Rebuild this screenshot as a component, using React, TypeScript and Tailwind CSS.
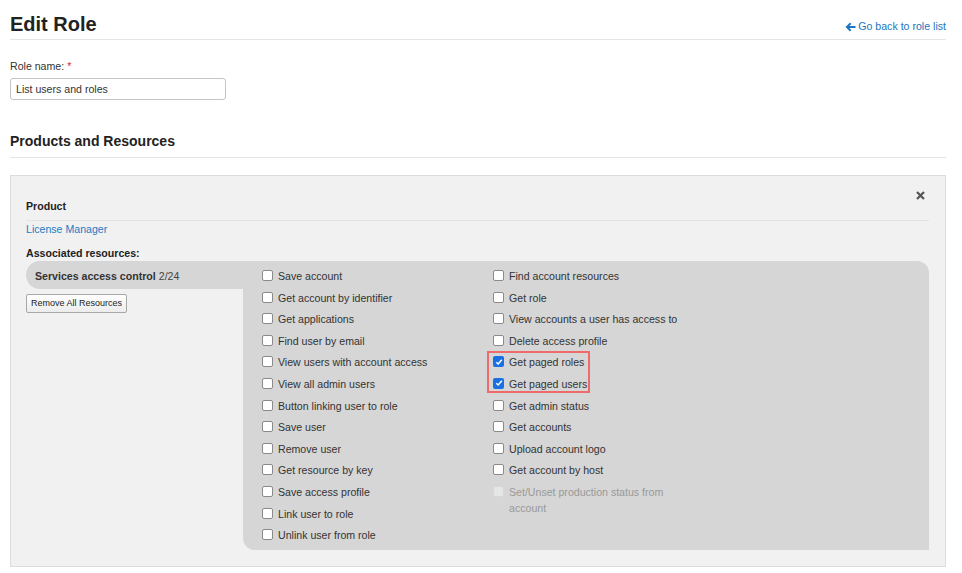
import React from 'react';

const colA = [
  'Save account',
  'Get account by identifier',
  'Get applications',
  'Find user by email',
  'View users with account access',
  'View all admin users',
  'Button linking user to role',
  'Save user',
  'Remove user',
  'Get resource by key',
  'Save access profile',
  'Link user to role',
  'Unlink user from role',
];

const colB = [
  { label: 'Find account resources' },
  { label: 'Get role' },
  { label: 'View accounts a user has access to' },
  { label: 'Delete access profile' },
  { label: 'Get paged roles', checked: true },
  { label: 'Get paged users', checked: true },
  { label: 'Get admin status' },
  { label: 'Get accounts' },
  { label: 'Upload account logo' },
  { label: 'Get account by host' },
  { label: 'Set/Unset production status from account', disabled: true },
];

function Box({ checked, disabled }: { checked?: boolean; disabled?: boolean }) {
  if (checked) {
    return (
      <span className="mt-[2px] flex h-[11px] w-[11px] shrink-0 items-center justify-center rounded-[2px] bg-[#1a6fe3]">
        <svg width="8" height="8" viewBox="0 0 8 8">
          <path d="M1.3 4.2 L3.2 6 L6.8 1.8" fill="none" stroke="white" strokeWidth="1.5" />
        </svg>
      </span>
    );
  }
  return (
    <span
      className={
        disabled
          ? 'mt-[2px] h-[11px] w-[11px] shrink-0 rounded-[2px] border border-[#d8d8d8] bg-[#e6e6e6]'
          : 'mt-[2px] h-[11px] w-[11px] shrink-0 rounded-[2px] border border-[#8a8a8a] bg-white'
      }
    />
  );
}

function Row({ label, checked, disabled }: { label: string; checked?: boolean; disabled?: boolean }) {
  return (
    <div className="flex gap-[5px] leading-[16px]">
      <Box checked={checked} disabled={disabled} />
      <span className={disabled ? 'text-[#999]' : 'text-[#333]'}>{label}</span>
    </div>
  );
}

export default function App() {
  return (
    <div
      className="min-h-[573px] w-[962px] bg-white px-[10px] pb-[6px] text-[10.6px] text-[#333]"
      style={{ fontFamily: '"Liberation Sans", Arial, sans-serif' }}
    >
      {/* header */}
      <div className="mr-[6px] flex items-center justify-between border-b border-[#e5e5e5] pt-[9px]">
        <h1 className="text-[20px] font-bold leading-[30px] text-[#222]">Edit Role</h1>
        <a className="flex items-center gap-[2px] pt-[6px] text-[10.6px] text-[#1b75bc]">
          <svg width="11" height="10" viewBox="0 0 11 10">
            <path d="M5 0.5 L0.5 5 L5 9.5 L6.4 8.1 L4.3 6 L10.5 6 L10.5 4 L4.3 4 L6.4 1.9 Z" fill="#1b75bc" />
          </svg>
          Go back to role list
        </a>
      </div>

      {/* role name */}
      <div className="mt-[18px] leading-[16px]">
        Role name: <span className="text-[#e02020]">*</span>
      </div>
      <input
        defaultValue="List users and roles"
        className="mt-[4px] h-[22px] w-[216px] rounded-[3px] border border-[#c4c4c4] px-[5px] text-[10.6px] text-[#333] outline-none"
      />

      {/* products */}
      <h2 className="mr-[6px] mt-[31px] border-b border-[#e5e5e5] pb-[6px] text-[14px] font-bold leading-[20px] text-[#222]">
        Products and Resources
      </h2>

      <div className="mr-[6px] mt-[17px] border border-[#dcdcdc] bg-[#f1f1f1] pb-[16px] pl-[15px] pr-[16px] pt-[22px]">
        <div className="relative border-b border-[#e3e3e3] pb-[6px] font-bold leading-[16px] text-[#222]">
          Product
          <svg className="absolute right-[4px] top-[-7px]" width="9" height="9" viewBox="0 0 9 9">
            <path d="M1 1 L8 8 M8 1 L1 8" stroke="#555" strokeWidth="2.2" />
          </svg>
        </div>
        <div className="leading-[16px] text-[#1b7cc2]">License Manager</div>
        <div className="mt-[8px] font-bold leading-[16px] text-[#222]">Associated resources:</div>

        <div className="grid grid-cols-[217px_1fr]">
          <div>
            <div className="flex h-[28px] items-center rounded-l-[14px] bg-[#d6d6d6] pl-[9px] pt-[4px]">
              <span className="font-bold text-[#333]">Services access control</span>
              <span className="ml-[3px] text-[#444]">2/24</span>
            </div>
            <button className="mt-[5px] h-[19px] rounded-[2px] border border-[#a8a8a8] bg-gradient-to-b from-white to-[#ececec] px-[4px] text-[9px] leading-[17px] text-[#222]">
              Remove All Resources
            </button>
          </div>

          <div className="flex rounded-bl-[12px] rounded-tr-[12px] bg-[#d6d6d6] pb-[7px] pl-[19px] pt-[7px]">
            <div className="flex w-[231px] flex-col gap-[5.6px]">
              {colA.map((l) => (
                <Row key={l} label={l} />
              ))}
            </div>
            <div className="relative flex w-[196px] flex-col gap-[5.6px]">
              {colB.map((r) => (
                <Row key={r.label} label={r.label} checked={r.checked} disabled={r.disabled} />
              ))}
              <div className="absolute left-[-6px] top-[83px] h-[42px] w-[103px] border-2 border-[#ef6a6a]" />
            </div>
          </div>
        </div>
      </div>
    </div>
  );
}
